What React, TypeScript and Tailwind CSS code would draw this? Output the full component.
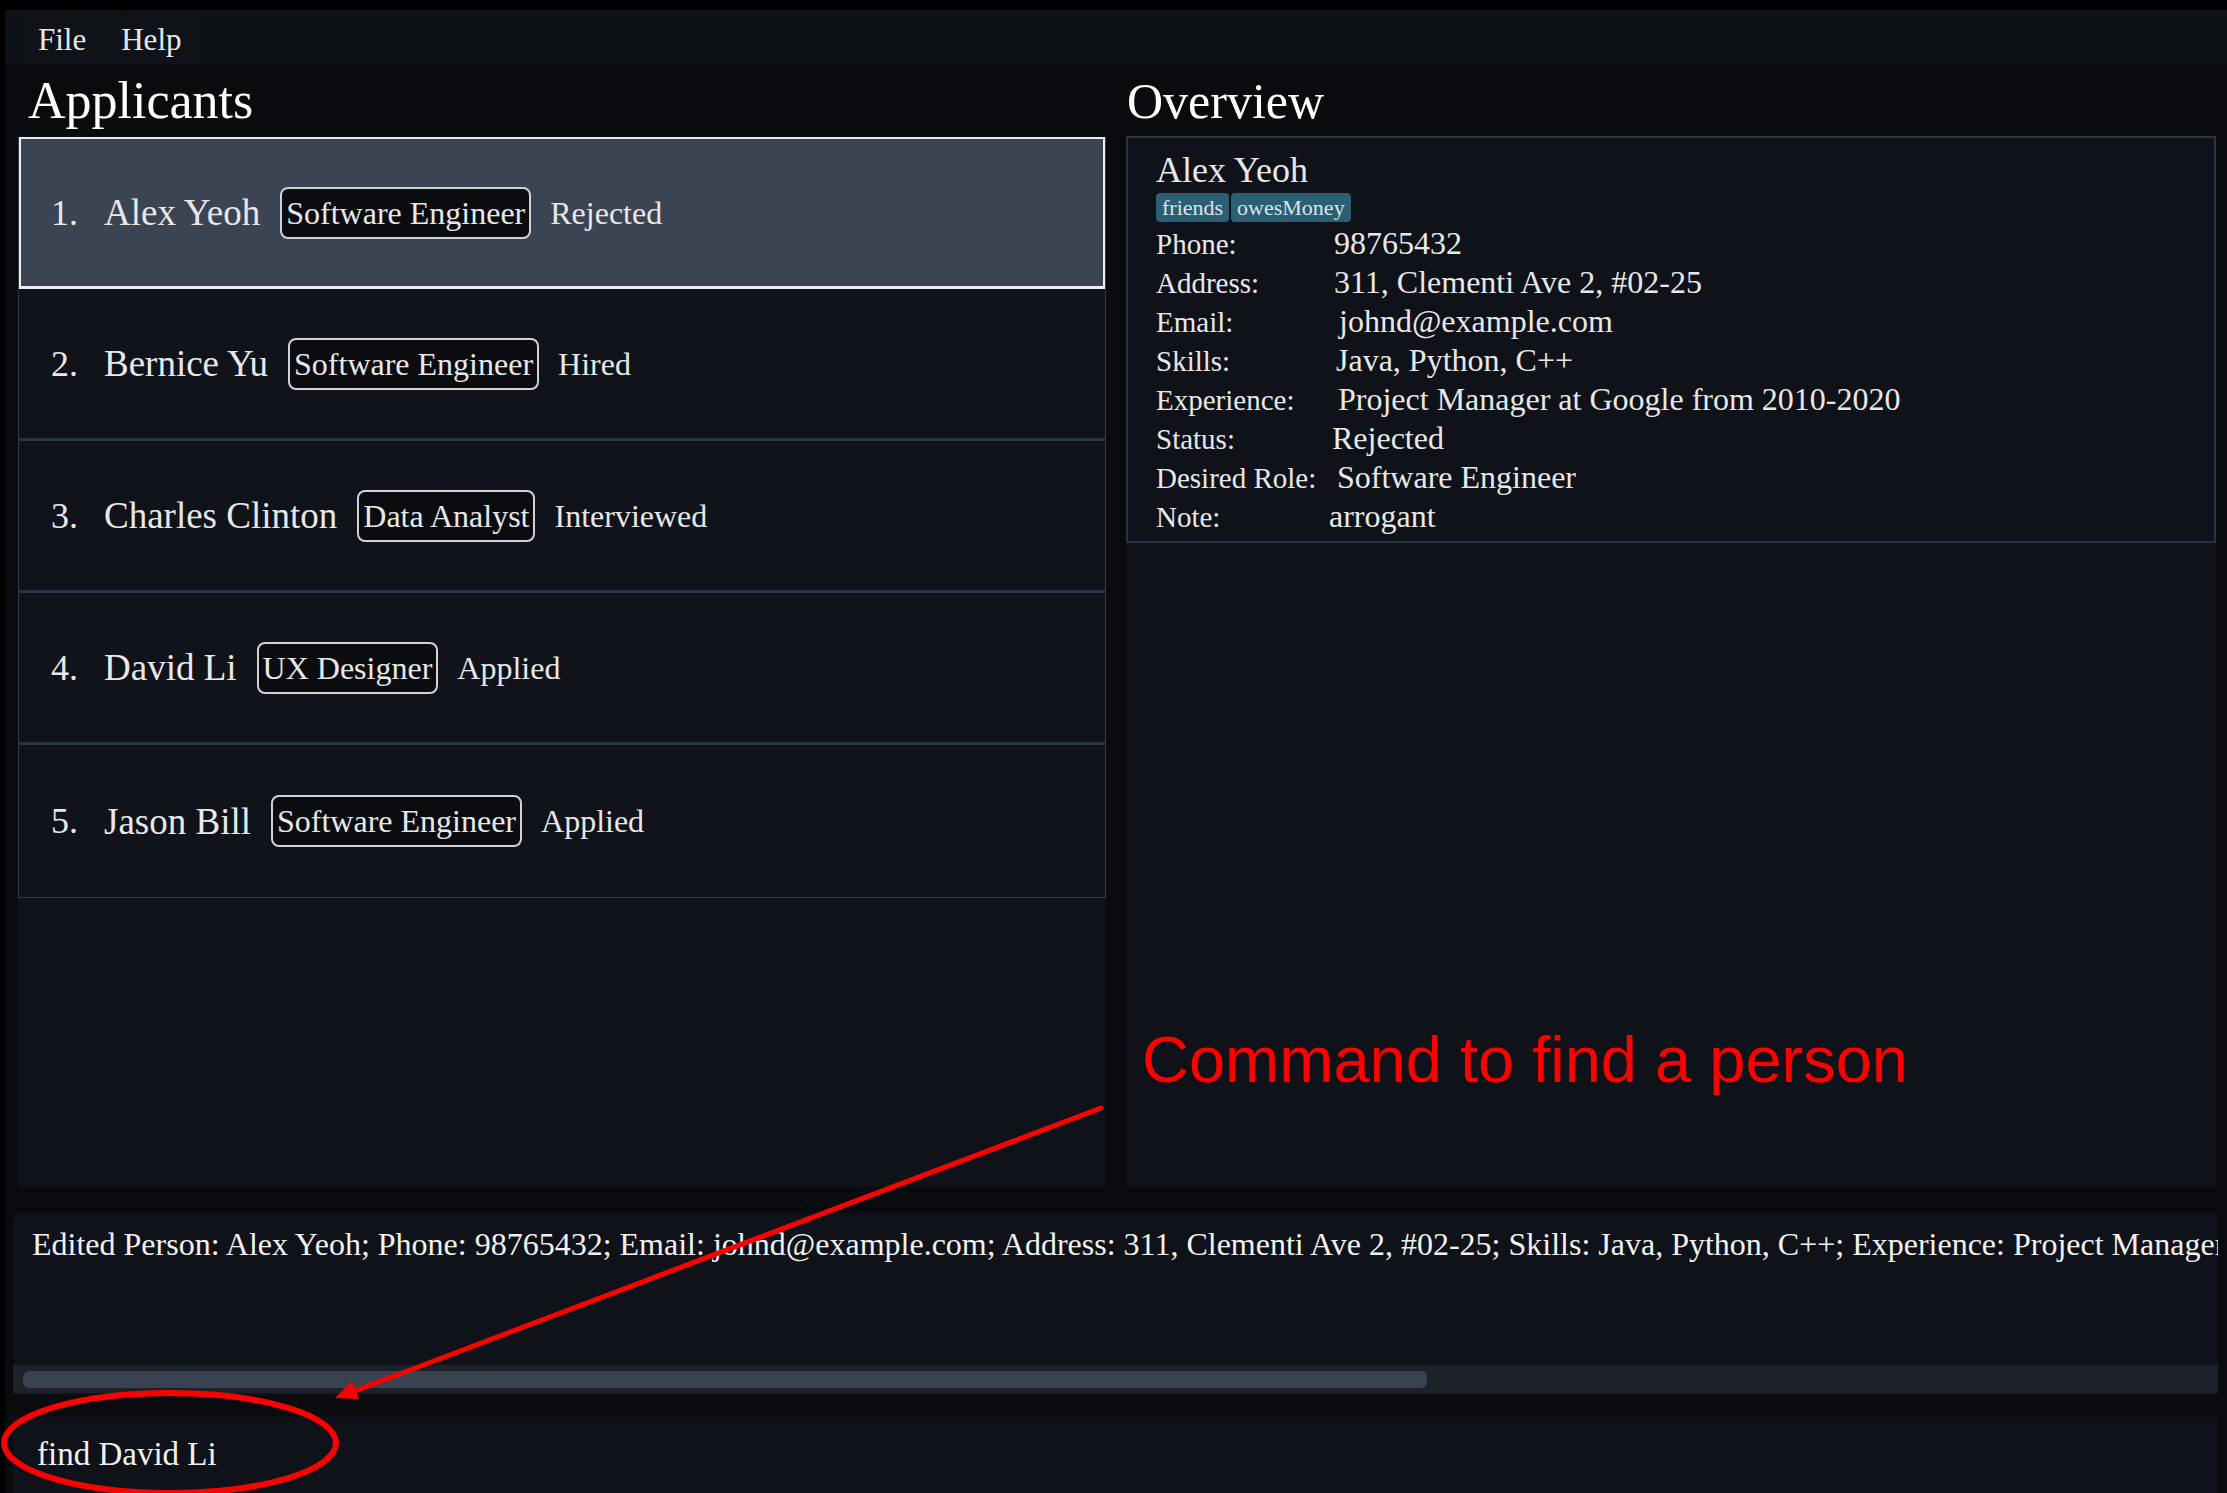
import React from 'react';

const applicants = [
  { name: 'Alex Yeoh', role: 'Software Engineer', status: 'Rejected', selected: true },
  { name: 'Bernice Yu', role: 'Software Engineer', status: 'Hired', selected: false },
  { name: 'Charles Clinton', role: 'Data Analyst', status: 'Interviewed', selected: false },
  { name: 'David Li', role: 'UX Designer', status: 'Applied', selected: false },
  { name: 'Jason Bill', role: 'Software Engineer', status: 'Applied', selected: false },
];

// the values in the original are a little ragged, keep that
const details = [
  { label: 'Phone:', value: '98765432', shift: 'ml-0' },
  { label: 'Address:', value: '311, Clementi Ave 2, #02-25', shift: 'ml-0' },
  { label: 'Email:', value: 'johnd@example.com', shift: 'ml-[5px]' },
  { label: 'Skills:', value: 'Java, Python, C++', shift: 'ml-[2px]' },
  { label: 'Experience:', value: 'Project Manager at Google from 2010-2020', shift: 'ml-[4px]' },
  { label: 'Status:', value: 'Rejected', shift: 'ml-[-2px]' },
  { label: 'Desired Role:', value: 'Software Engineer', shift: 'ml-[3px]' },
  { label: 'Note:', value: 'arrogant', shift: 'ml-[-5px]' },
];

const resultText =
  'Edited Person: Alex Yeoh; Phone: 98765432; Email: johnd@example.com; Address: 311, Clementi Ave 2, #02-25; Skills: Java, Python, C++; Experience: Project Manager at Google from 2010-2020; Status: Rejected; Desired Role: Software Engineer; Note: arrogant; Tags: [friends][owesMoney]';

const App = () => {
  return (
    <div className="relative w-[2227px] h-[1493px] overflow-hidden bg-black pt-[10px] pl-[5px] flex flex-col font-['Liberation_Serif',serif] text-[#e8e8ea]">
      <div className="flex-1 flex flex-col bg-[#0a0b0f]">
        {/* Menu bar */}
        <div className="h-[54px] shrink-0 bg-[#0e1115] flex pl-[17px]">
          <div className="h-[54px] px-4 pt-[6px] leading-[48px] text-[31px] bg-[#0f1318]">File</div>
          <div className="h-[54px] pl-[18px] pr-4 pt-[6px] leading-[48px] text-[31px] bg-[#0f1318] ml-px">Help</div>
        </div>

        {/* Main panels */}
        <div className="flex-1 flex gap-[20px] pl-[13px] pr-[11px] pt-[12px] min-h-0">
          {/* Applicants */}
          <div className="w-[1088px] flex flex-col">
            <h1 className="h-[50px] text-[52px] leading-[50px] pl-[10px] mb-[11px] text-white">Applicants</h1>
            <div className="flex-1 bg-[#0f1218]">
              <div className="border border-t-0 border-[#333b48]">
                {applicants.map((a, i) => (
                  <div
                    key={a.name}
                    className={
                      a.selected
                        ? 'h-[152px] flex items-center pl-[30px] bg-[#3b4453] border-2 border-[#eef0f2] border-b-[3px]'
                        : i === applicants.length - 1
                        ? 'h-[152px] flex items-center pl-[32px] bg-[#10131a]'
                        : 'h-[152px] flex items-center pl-[32px] bg-[#10131a] border-b-[3px] border-[#2c3441]'
                    }
                  >
                    <span className="w-[53px] text-[36px] leading-none">{i + 1}.</span>
                    <span className="text-[37px] leading-none">{a.name}</span>
                    <span className="ml-[20px] px-[4px] py-[2px] text-[32px] leading-[44px] border-2 border-[#cfd2d6] rounded-[8px] bg-[#0b0c10]">
                      {a.role}
                    </span>
                    <span className="ml-[19px] text-[32px] leading-none">{a.status}</span>
                  </div>
                ))}
              </div>
            </div>
          </div>

          {/* Overview */}
          <div className="flex-1 flex flex-col">
            <h1 className="h-[50px] text-[50px] leading-[50px] pl-px mb-[10px] text-white">Overview</h1>
            <div className="flex-1 bg-[#0f1218]">
              <div className="border-2 border-[#2d3441] h-[407px] pt-[14px] pl-[28px]">
                <div className="text-[36px] leading-none">Alex Yeoh</div>
                <div className="flex gap-[2px] mt-[5px]">
                  <span className="h-[29px] px-[6px] rounded-[4px] bg-[#2b5f73] text-[22px] leading-[29px] text-[#dde3e8]">friends</span>
                  <span className="h-[29px] px-[6px] rounded-[4px] bg-[#2b5f73] text-[22px] leading-[29px] text-[#dde3e8]">owesMoney</span>
                </div>
                <div className="mt-[2px] flex flex-col">
                  {details.map((d) => (
                    <div key={d.label} className="flex items-baseline h-[39px] leading-[39px]">
                      <span className="w-[178px] shrink-0 text-[29px]">{d.label}</span>
                      <span className={d.shift + ' text-[32px]'}>{d.value}</span>
                    </div>
                  ))}
                </div>
              </div>
            </div>
          </div>
        </div>

        {/* Result display */}
        <div className="mt-[26px] ml-[8px] mr-[9px] h-[182px] shrink-0 bg-[#0f1218] rounded-[4px] flex flex-col overflow-hidden">
          <div className="flex-1 overflow-hidden whitespace-nowrap pl-[19px] pt-[15px] text-[32px] leading-none text-[#f2f2f2]">
            {resultText}
          </div>
          <div className="h-[28px] bg-[#1d222a] pt-[6px] pl-[10px] mb-[2px]">
            <div className="w-[1404px] h-[17px] rounded-[6px] bg-[#394250]" />
          </div>
        </div>

        {/* Command box */}
        <div className="mt-[22px] ml-[8px] mr-[9px] h-[76px] shrink-0 bg-[#0f1218] pl-[24px] pt-[21px] text-[33px] leading-none text-[#f2f2f2]">
          find David Li
        </div>
      </div>

      {/* Red annotation laid over the app */}
      <div className="absolute left-[1142px] top-[1027px] text-[65px] leading-none text-[#ff0000] font-['Liberation_Sans',sans-serif] whitespace-nowrap pointer-events-none">
        Command to find a person
      </div>
      <svg className="absolute inset-0 pointer-events-none" width="2227" height="1493" viewBox="0 0 2227 1493">
        <line x1="1101" y1="1108" x2="352" y2="1392" stroke="#ff0000" strokeWidth="5" strokeLinecap="round" />
        <polygon points="335,1398 359,1399 352,1381" fill="#ff0000" />
        <ellipse cx="170" cy="1443" rx="166" ry="50" fill="none" stroke="#ff0000" strokeWidth="6" />
      </svg>
    </div>
  );
};

export default App;
